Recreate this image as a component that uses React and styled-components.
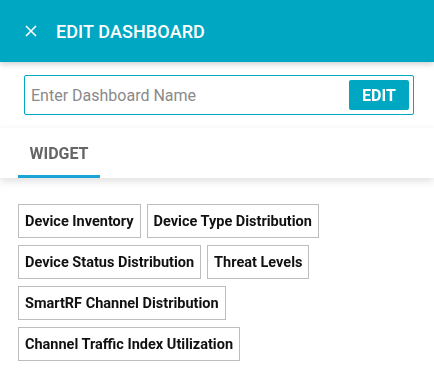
import React from 'react'
import styled, { createGlobalStyle } from 'styled-components'

const GlobalStyle = createGlobalStyle`
    body {
        margin: 0;
        background: #fff;
        font-family: Roboto, "Liberation Sans", sans-serif;
    }
`;

const Header = styled.div`
    height: 62px;
    background: #00a7c2;
    display: flex;
    align-items: center;
    padding-left: 25px;
    box-shadow: 0 2px 6px rgba(0, 0, 0, 0.2);
    position: relative;
    z-index: 2;
`;

const CloseButton = styled.button`
    width: 12px;
    height: 12px;
    padding: 0;
    border: none;
    background: none;
    display: flex;
    margin-right: 19px;
    cursor: pointer;
`;

const Title = styled.span`
    color: #fff;
    font-size: 18px;
    font-weight: 500;
    letter-spacing: 0.1px;
`;

const NameSection = styled.div`
    padding: 13px 20px 13px 24px;
`;

const NameBox = styled.div`
    height: 40px;
    box-sizing: border-box;
    border: 1px solid #00a7c2;
    border-radius: 2px;
    display: flex;
    align-items: center;
    padding: 0 4px 0 6px;
`;

const NameInput = styled.input`
    flex: 1;
    border: none;
    outline: none;
    font-family: inherit;
    font-size: 16px;
    color: #333;
    padding: 0;
    caret-color: #222;
    &::placeholder {
        color: #8a8a8a;
    }
`;

const EditButton = styled.button`
    width: 60px;
    height: 30px;
    background: #00a7c2;
    color: #fff;
    border: none;
    border-radius: 2px;
    font-family: inherit;
    font-size: 16px;
    font-weight: 700;
    cursor: pointer;
`;

const TabBar = styled.div`
    height: 50px;
    display: flex;
    padding-left: 18px;
    background: #fff;
    box-shadow: 0 3px 8px rgba(0, 0, 0, 0.13);
`;

const Tab = styled.div`
    width: 82px;
    display: flex;
    align-items: center;
    justify-content: center;
    font-size: 16px;
    font-weight: 700;
    color: #666;
    box-sizing: border-box;
    border-bottom: 3px solid ${p => (p.active ? '#1aa5d6' : 'transparent')};
    padding-top: 3px;
`;

const WidgetList = styled.div`
    display: flex;
    flex-wrap: wrap;
    gap: 7px 6px;
    padding: 26px 18px;
`;

const Widget = styled.div`
    height: 34px;
    box-sizing: border-box;
    border: 1px solid #bdbdbd;
    padding: 0 6px;
    display: flex;
    align-items: center;
    font-size: 14.5px;
    font-weight: 700;
    color: #111;
    cursor: pointer;
`;

const widgets = [
    'Device Inventory',
    'Device Type Distribution',
    'Device Status Distribution',
    'Threat Levels',
    'SmartRF Channel Distribution',
    'Channel Traffic Index Utilization',
];

function App() {
    return (
        <>
            <GlobalStyle />
            <Header>
                <CloseButton>
                    <svg width="12" height="12" viewBox="0 0 12 12">
                        <path d="M1 1L11 11M11 1L1 11" stroke="#fff" strokeWidth="1.6" />
                    </svg>
                </CloseButton>
                <Title>EDIT DASHBOARD</Title>
            </Header>
            <NameSection>
                <NameBox>
                    <NameInput placeholder="Enter Dashboard Name" autoFocus />
                    <EditButton>EDIT</EditButton>
                </NameBox>
            </NameSection>
            <TabBar>
                <Tab active>WIDGET</Tab>
            </TabBar>
            <WidgetList>
                {widgets.map(w => (
                    <Widget key={w}>{w}</Widget>
                ))}
            </WidgetList>
        </>
    )
}

export default App
